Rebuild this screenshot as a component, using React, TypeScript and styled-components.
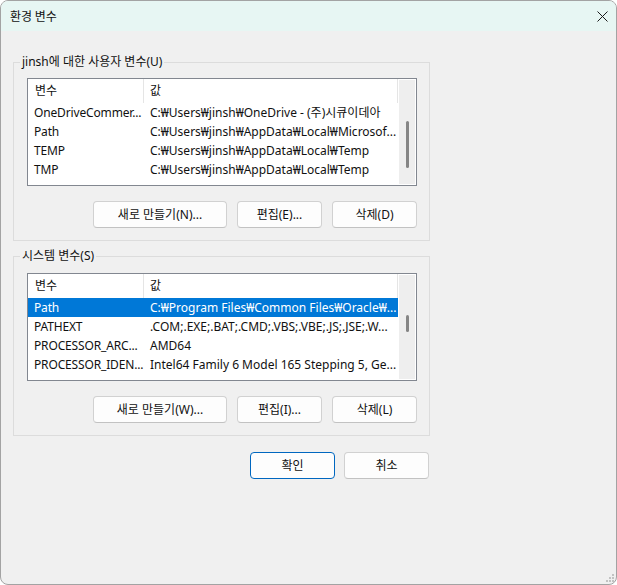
import React from "react";
import styled, { createGlobalStyle, css } from "styled-components";

const GlobalStyle = createGlobalStyle`
  html, body { margin: 0; padding: 0; background: #ffffff; overflow: hidden; }
  body { font-family: "Noto Sans", "Noto Sans CJK KR", sans-serif; color: #000; }
  * { box-sizing: border-box; }
`;

const Window = styled.div`
  position: relative;
  width: 617px;
  height: 585px;
  border: 1px solid #a3a3a3;
  border-radius: 8px;
  background: #f0f0f0;
  overflow: hidden;
  display: flex;
  flex-direction: column;
  font-size: 12px;
  line-height: 16px;
`;

const TitleBar = styled.div`
  height: 30px;
  flex: none;
  background: #e7f6f3;
  display: flex;
  align-items: center;
  justify-content: space-between;
  padding: 0 8px 0 9px;
`;

const Title = styled.span`
  font-family: "Noto Sans CJK KR", sans-serif;
  font-size: 12px;
  color: #111;
`;

const CloseIcon = styled.svg`
  width: 11px;
  height: 11px;
  display: block;
`;

const Body = styled.div`
  padding: 23px 0 0 12px;
  display: flex;
  flex-direction: column;
`;

const Group = styled.fieldset<{ $gap?: number }>`
  margin: ${(p) => p.$gap ?? 0}px 0 0 0;
  padding: 0;
  width: 417px;
  min-width: 0;
  border: 1px solid #dcdcdc;
`;

const Legend = styled.legend`
  margin-left: 6px;
  padding: 0 2px;
  font-size: 12px;
  line-height: 16px;
  color: #111;
`;

const GroupContent = styled.div<{ $top: number; $bottom: number }>`
  padding: ${(p) => p.$top}px 12px ${(p) => p.$bottom}px 13px;
`;

const ListBox = styled.div`
  height: 108px;
  border: 1px solid #828790;
  background: #ffffff;
  display: flex;
`;

const ListContent = styled.div`
  flex: 1;
  min-width: 0;
  display: flex;
  flex-direction: column;
`;

const gridCols = css`
  display: grid;
  grid-template-columns: 116px minmax(0, 1fr);
`;

const HeaderRow = styled.div`
  ${gridCols};
  height: 24px;
`;

const HeaderCell = styled.div<{ $pad: number }>`
  padding-left: ${(p) => p.$pad}px;
  border-right: 1px solid #e5e5e5;
  display: flex;
  align-items: center;
  height: 24px;
  color: #111;
`;

const Row = styled.div<{ $selected?: boolean }>`
  ${gridCols};
  height: 19px;
  align-items: center;
  background: ${(p) => (p.$selected ? "#0078d7" : "transparent")};
  color: ${(p) => (p.$selected ? "#ffffff" : "#111")};
`;

const NameCell = styled.div`
  padding-left: 6px;
  white-space: nowrap;
  overflow: hidden;
  letter-spacing: -0.15px;
`;

const ValueCell = styled.div`
  padding-left: 6px;
  padding-right: 4px;
  white-space: nowrap;
  overflow: hidden;
`;

const ScrollTrack = styled.div`
  width: 16px;
  margin: 1px;
  background: #eeeeee;
  display: flex;
  justify-content: center;
  flex: none;
`;

const Thumb = styled.div`
  width: 3px;
  border-radius: 2px;
  background: #858585;
`;

const ButtonRow = styled.div`
  display: flex;
  justify-content: flex-end;
  gap: 10px;
  margin-top: 15px;
`;

const Footer = styled.div`
  width: 417px;
  display: flex;
  justify-content: flex-end;
  gap: 9px;
  padding-right: 1px;
  margin-top: 16px;
`;

const Button = styled.button<{ $w: number; $primary?: boolean }>`
  width: ${(p) => p.$w}px;
  height: 27px;
  padding: 0;
  border: 1px solid ${(p) => (p.$primary ? "#0067c0" : "#d1d1d1")};
  border-bottom-color: ${(p) => (p.$primary ? "#0067c0" : "#c2c2c2")};
  border-radius: 4px;
  background: #fdfdfd;
  font-family: "Noto Sans", "Noto Sans CJK KR", sans-serif;
  font-size: 12px;
  line-height: 16px;
  color: #111;
  display: flex;
  align-items: center;
  justify-content: center;
`;

const Grip = styled.svg`
  position: absolute;
  right: 1px;
  bottom: 1px;
  width: 10px;
  height: 10px;
`;

type Item = { name: string; value: string; selected?: boolean };

const userVars: Item[] = [
  { name: "OneDriveCommer...", value: "C:₩Users₩jinsh₩OneDrive - (주)시큐이데아" },
  { name: "Path", value: "C:₩Users₩jinsh₩AppData₩Local₩Microsof..." },
  { name: "TEMP", value: "C:₩Users₩jinsh₩AppData₩Local₩Temp" },
  { name: "TMP", value: "C:₩Users₩jinsh₩AppData₩Local₩Temp" },
];

const sysVars: Item[] = [
  { name: "Path", value: "C:₩Program Files₩Common Files₩Oracle₩...", selected: true },
  { name: "PATHEXT", value: ".COM;.EXE;.BAT;.CMD;.VBS;.VBE;.JS;.JSE;.W..." },
  { name: "PROCESSOR_ARC...", value: "AMD64" },
  { name: "PROCESSOR_IDEN...", value: "Intel64 Family 6 Model 165 Stepping 5, Ge..." },
];

function VarList({ items, thumbTop, thumbHeight }: { items: Item[]; thumbTop: number; thumbHeight: number }) {
  return (
    <ListBox>
      <ListContent>
        <HeaderRow>
          <HeaderCell $pad={7}>변수</HeaderCell>
          <HeaderCell $pad={6}>값</HeaderCell>
        </HeaderRow>
        {items.map((it) => (
          <Row key={it.name} $selected={it.selected}>
            <NameCell>{it.name}</NameCell>
            <ValueCell>{it.value}</ValueCell>
          </Row>
        ))}
      </ListContent>
      <ScrollTrack>
        <Thumb style={{ marginTop: thumbTop, height: thumbHeight }} />
      </ScrollTrack>
    </ListBox>
  );
}

export default function App() {
  return (
    <>
      <GlobalStyle />
      <Window>
        <TitleBar>
          <Title>환경 변수</Title>
          <CloseIcon viewBox="0 0 11 11">
            <path d="M0.5 0.5 L10.5 10.5 M10.5 0.5 L0.5 10.5" stroke="#1a1a1a" strokeWidth="1" fill="none" />
          </CloseIcon>
        </TitleBar>
        <Body>
          <Group>
            <Legend>jinsh에 대한 사용자 변수(U)</Legend>
            <GroupContent $top={8} $bottom={12}>
              <VarList items={userVars} thumbTop={41} thumbHeight={47} />
              <ButtonRow>
                <Button $w={134}>새로 만들기(N)...</Button>
                <Button $w={85}>편집(E)...</Button>
                <Button $w={85}>삭제(D)</Button>
              </ButtonRow>
            </GroupContent>
          </Group>
          <Group $gap={7}>
            <Legend>시스템 변수(S)</Legend>
            <GroupContent $top={9} $bottom={12}>
              <VarList items={sysVars} thumbTop={40} thumbHeight={17} />
              <ButtonRow>
                <Button $w={134}>새로 만들기(W)...</Button>
                <Button $w={85}>편집(I)...</Button>
                <Button $w={85}>삭제(L)</Button>
              </ButtonRow>
            </GroupContent>
          </Group>
          <Footer>
            <Button $w={85} $primary>확인</Button>
            <Button $w={85}>취소</Button>
          </Footer>
        </Body>
        <Grip viewBox="0 0 10 10">
          <rect x="7" y="1" width="2" height="2" fill="#c2c2c2" />
          <rect x="4" y="4" width="2" height="2" fill="#c2c2c2" />
          <rect x="7" y="4" width="2" height="2" fill="#c2c2c2" />
          <rect x="1" y="7" width="2" height="2" fill="#c2c2c2" />
          <rect x="4" y="7" width="2" height="2" fill="#c2c2c2" />
          <rect x="7" y="7" width="2" height="2" fill="#c2c2c2" />
        </Grip>
      </Window>
    </>
  );
}
